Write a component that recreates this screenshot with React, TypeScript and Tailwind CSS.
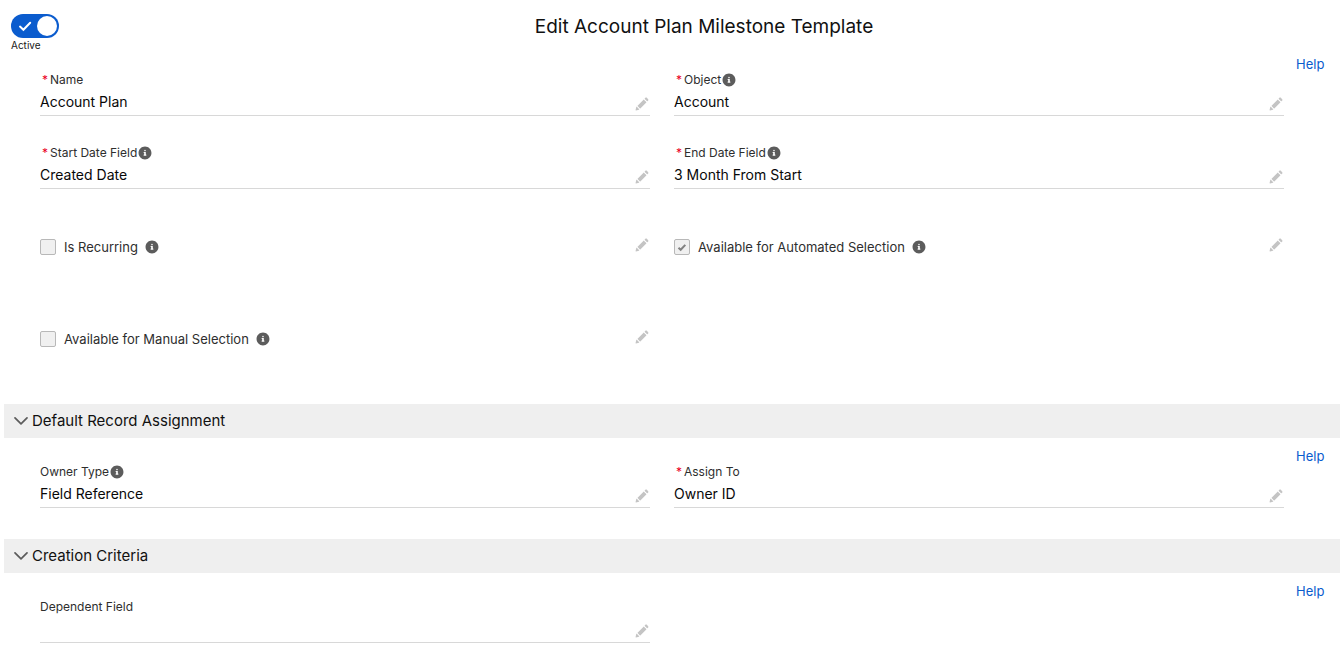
import { useState } from "react";
import type { PropsWithChildren } from "react";

const EditIcon = () => (
  <svg viewBox="0 0 52 52" className="h-[14px] w-[14px] fill-[#c4c4c4]" aria-hidden="true">
    <path d="M9.5 33.4l8.9 8.9c.4.4 1 .4 1.4 0L42 20c.4-.4.4-1 0-1.4l-8.8-8.8c-.4-.4-1-.4-1.4 0L9.5 32.1c-.4.4-.4 1 0 1.3zM36.1 5.7c-.4.4-.4 1 0 1.4l8.8 8.8c.4.4 1 .4 1.4 0l2.5-2.5c1.6-1.5 1.6-3.9 0-5.5l-4.7-4.7c-1.6-1.6-4.1-1.6-5.7 0l-2.3 2.5zM2.1 48.2c-.2 1 .7 1.9 1.7 1.7l10.9-2.6c.4-.1.7-.3.9-.5l.2-.2c.2-.2.3-.9-.1-1.3l-9-9c-.4-.4-1.1-.3-1.3-.1l-.2.2c-.3.3-.4.6-.5.9L2.1 48.2z" />
  </svg>
);

const InfoIcon = () => (
  <svg viewBox="0 0 52 52" className="h-[14px] w-[14px] fill-[#5c5c5c]" aria-hidden="true">
    <path d="M26 2C12.7 2 2 12.7 2 26s10.7 24 24 24 24-10.7 24-24S39.3 2 26 2zm0 12.1c1.7 0 3 1.3 3 3s-1.3 3-3 3-3-1.3-3-3 1.3-3 3-3zm5 21c0 .5-.4.9-1 .9h-8c-.5 0-1-.3-1-.9v-2c0-.5.4-1.1 1-1.1.5 0 1-.3 1-.9v-4c0-.5-.4-1.1-1-1.1-.5 0-1-.3-1-.9v-2c0-.5.4-1.1 1-1.1h6c.5 0 1 .5 1 1.1v8c0 .5.4.9 1 .9.5 0 1 .5 1 1.1v2z" />
  </svg>
);

const InfoButton = ({ label }: { label: string }) => (
  <button type="button" aria-label={`About ${label}`} className="shrink-0">
    <InfoIcon />
  </button>
);

const EditButton = ({ label }: { label: string }) => (
  <button type="button" aria-label={`Edit ${label}`} className="shrink-0 pr-px">
    <EditIcon />
  </button>
);

type FieldProps = {
  label: string;
  value?: string;
  required?: boolean;
  info?: boolean;
};

const Field = ({ label, value, required, info }: FieldProps) => (
  <dl>
    <dt className="flex h-[18px] items-end text-xs leading-4 text-[#2e2e2e]">
      {required && <span className="w-[10px] pl-[2px] text-[#ea001e]">*</span>}
      <span className="mr-px">{label}</span>
      {info && (
        <span className="flex h-4 items-center">
          <InfoButton label={label} />
        </span>
      )}
    </dt>
    <dd className="flex h-7 items-center justify-between border-b border-[#d8d8d8] text-sm text-[#080808]">
      <span>{value}</span>
      <span className="flex pt-1">
        <EditButton label={label} />
      </span>
    </dd>
  </dl>
);

type CheckFieldProps = {
  id: string;
  label: string;
  checked?: boolean;
};

const CheckField = ({ id, label, checked = false }: CheckFieldProps) => (
  <div className="flex h-[65px] items-start justify-between pt-[22px]">
    <div className="flex items-center pt-px">
      <span className="relative mr-2 flex">
        <input
          id={id}
          type="checkbox"
          checked={checked}
          disabled
          readOnly
          className="h-4 w-4 appearance-none rounded-[2px] border border-[#b8b8b8] bg-[#f0f0f0]"
        />
        {checked && (
          <svg viewBox="0 0 16 16" className="absolute inset-0 h-4 w-4" aria-hidden="true">
            <path d="M4.5 8.7l2.2 2.1 4.6-4.9" fill="none" stroke="#828282" strokeWidth="2" />
          </svg>
        )}
      </span>
      <label htmlFor={id} className="mr-[7px] text-[13px] leading-4 text-[#2e2e2e]">
        {label}
      </label>
      <InfoButton label={label} />
    </div>
    <EditButton label={label} />
  </div>
);

const SectionBody = ({ children }: PropsWithChildren) => (
  <div className="flex items-start gap-3 pr-4 pl-10">
    <div className="grid flex-1 grid-cols-2 gap-x-6 gap-y-[27px] pt-4">{children}</div>
    <a href="#help" className="w-7 text-[13px] leading-5 text-[#0b5cce]">
      Help
    </a>
  </div>
);

const Section = ({ title, children }: PropsWithChildren<{ title: string }>) => {
  const [open, setOpen] = useState(true);

  return (
    <section className="mt-[31px]">
      <h2 className="ml-1 bg-[#efefef]">
        <button
          type="button"
          aria-expanded={open}
          onClick={() => setOpen(!open)}
          className="flex h-[34px] w-full items-center gap-1 pl-[10px] text-left text-[15px] text-[#111111]"
        >
          <svg viewBox="0 0 14 14" className="h-[14px] w-[14px]" aria-hidden="true">
            <path
              d="M1 3.9l6 6 6-6"
              fill="none"
              stroke="#5c5c5c"
              strokeWidth="1.7"
              strokeLinecap="round"
              strokeLinejoin="round"
            />
          </svg>
          {title}
        </button>
      </h2>
      {open && (
        <div className="pt-2">
          <SectionBody>{children}</SectionBody>
        </div>
      )}
    </section>
  );
};

const ActiveToggle = () => {
  const [active, setActive] = useState(true);

  return (
    <label className="flex w-12 cursor-pointer flex-col text-[10px] leading-[14px] text-[#181818]">
      <input
        type="checkbox"
        role="switch"
        checked={active}
        onChange={() => setActive(!active)}
        className="peer sr-only"
      />
      <span className="flex h-6 w-12 items-center justify-between rounded-full bg-[#747474] px-[2px] peer-checked:bg-[#0b5cce]">
        {active && (
          <svg viewBox="0 0 14 12" className="ml-[5px] h-3 w-[14px]" aria-hidden="true">
            <path
              d="M2 6.6l3.4 3.2 6.8-7"
              fill="none"
              stroke="#ffffff"
              strokeWidth="2"
              strokeLinecap="round"
            />
          </svg>
        )}
        <span className="h-5 w-5 rounded-full bg-white" />
      </span>
      Active
    </label>
  );
};

const App = () => (
  <main className="bg-white pb-5 font-['Inter','Liberation_Sans',sans-serif]">
    <header className="flex items-start gap-[9px] pt-[14px] pb-[2px] pl-[11px]">
      <ActiveToggle />
      <h1 className="flex-1 text-center text-[19px] leading-[26px] text-[#111111]">
        Edit Account Plan Milestone Template
      </h1>
    </header>
    <SectionBody>
      <Field label="Name" value="Account Plan" required />
      <Field label="Object" value="Account" required info />
      <Field label="Start Date Field" value="Created Date" required info />
      <Field label="End Date Field" value="3 Month From Start" required info />
      <CheckField id="is-recurring" label="Is Recurring" />
      <CheckField id="automated-selection" label="Available for Automated Selection" checked />
      <CheckField id="manual-selection" label="Available for Manual Selection" />
    </SectionBody>
    <Section title="Default Record Assignment">
      <Field label="Owner Type" value="Field Reference" info />
      <Field label="Assign To" value="Owner ID" required />
    </Section>
    <Section title="Creation Criteria">
      <Field label="Dependent Field" />
    </Section>
  </main>
);

export default App;
